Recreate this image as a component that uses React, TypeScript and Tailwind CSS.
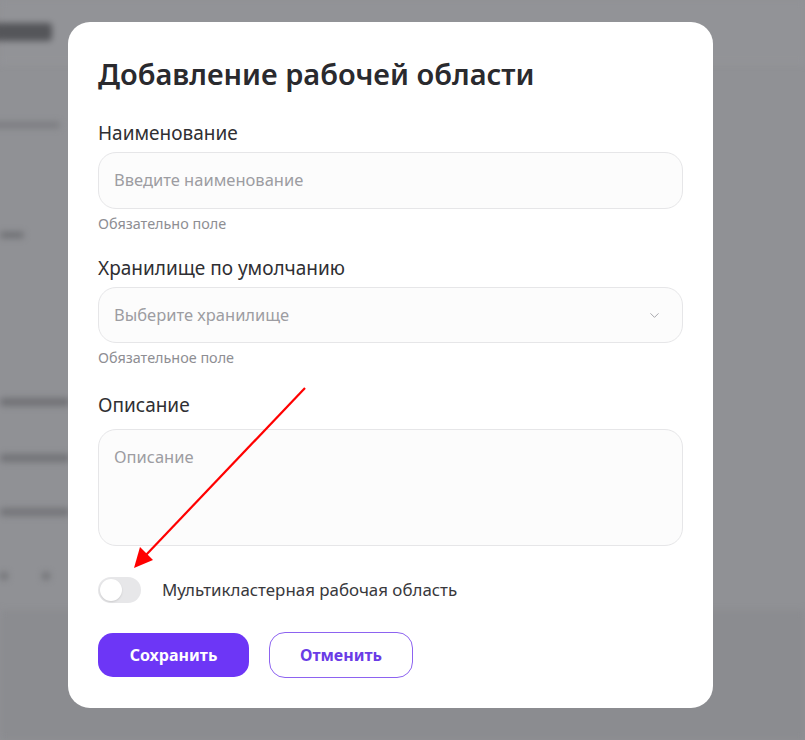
import { ChevronDown } from "lucide-react";

const шрифт = { fontFamily: '"Noto Sans", "Open Sans", sans-serif' };

function ФоновыеСтроки() {
  // размытая страница за модальным окном
  return (
    <div className="flex flex-col blur-[3px]">
      <div className="flex h-[64px] items-center border-b border-[#9a9b9f] bg-[#929397] pl-0">
        <div className="ml-[-8px] h-[18px] w-[60px] rounded bg-[#55565a]" />
      </div>
      <div className="mt-[58px] ml-[-10px] h-[6px] w-[70px] rounded bg-[#7b7c80]" />
      <div className="mt-[104px] h-[6px] w-[24px] rounded bg-[#6e6f73]" />
      <div className="mt-[160px] h-[8px] w-[70px] rounded bg-[#707175]" />
      <div className="mt-[48px] h-[8px] w-[70px] rounded bg-[#727377]" />
      <div className="mt-[46px] h-[8px] w-[70px] rounded bg-[#747579]" />
      <div className="mt-[56px] flex gap-[34px]">
        <div className="h-[8px] w-[8px] rounded-full bg-[#727377]" />
        <div className="h-[8px] w-[8px] rounded-full bg-[#727377]" />
      </div>
      <div className="mt-[30px] h-[130px] bg-[#8b8c90]" />
    </div>
  );
}

function Поле({ label, placeholder, hint }: { label: string; placeholder: string; hint?: string }) {
  return (
    <div className="flex flex-col">
      <label className="text-[19px] leading-[24px] text-[#2f2f33]">{label}</label>
      <div className="mt-[7px] flex h-[57px] items-center rounded-[18px] border border-[#e6e6e8] bg-[#fcfcfc] px-[15px]">
        <span className="text-[16.5px] text-[#9d9da2]">{placeholder}</span>
      </div>
      {hint && <span className="mt-[7px] text-[14.4px] leading-[16px] text-[#8e8e93]">{hint}</span>}
    </div>
  );
}

export default function App() {
  return (
    <div className="relative h-[740px] w-[805px] overflow-hidden bg-[#909195]" style={шрифт}>
      <ФоновыеСтроки />

      <div className="absolute left-[68px] top-[22px] flex h-[686px] w-[645px] flex-col rounded-[22px] bg-white px-[30px] pt-[30px]">
        <h1 className="text-[29px] font-semibold leading-[44px] text-[#2a2a2e]">Добавление рабочей области</h1>

        <div className="mt-[25px]">
          <Поле label="Наименование" placeholder="Введите наименование" hint="Обязательно поле" />
        </div>

        <div className="mt-[24px] flex flex-col">
          <label className="text-[19px] leading-[24px] text-[#2f2f33]">Хранилище по умолчанию</label>
          <div className="mt-[7px] flex h-[56px] items-center justify-between rounded-[18px] border border-[#e6e6e8] bg-[#fcfcfc] pl-[15px] pr-[20px]">
            <span className="text-[16.5px] text-[#9d9da2]">Выберите хранилище</span>
            <ChevronDown size={15} strokeWidth={1.6} className="text-[#a8a8ad]" />
          </div>
          <span className="mt-[7px] text-[14.4px] leading-[16px] text-[#8e8e93]">Обязательное поле</span>
        </div>

        <div className="mt-[27px] flex flex-col">
          <label className="text-[19px] leading-[24px] text-[#2f2f33]">Описание</label>
          <div className="mt-[12px] h-[117px] rounded-[18px] border border-[#e6e6e8] bg-[#fcfcfc] px-[15px] pt-[15px]">
            <span className="text-[16.5px] text-[#9d9da2]">Описание</span>
          </div>
        </div>

        <div className="mt-[31px] flex items-center gap-[21px]">
          <div className="flex h-[26px] w-[43px] items-center rounded-full bg-[#e7e7e9] p-[2px]">
            <div className="h-[22px] w-[22px] rounded-full bg-white shadow-[0_1px_2px_rgba(0,0,0,0.12)]" />
          </div>
          <span className="text-[16.9px] text-[#38383c]">Мультикластерная рабочая область</span>
        </div>

        <div className="mt-[29px] flex items-center gap-[20px]">
          <button className="h-[44px] w-[151px] rounded-[15px] bg-[#6d36f6] text-[16px] font-bold text-white">
            Сохранить
          </button>
          <button className="h-[46px] w-[144px] rounded-[16px] border border-[#8d63f0] bg-white text-[16px] font-bold text-[#6a3ce6]">
            Отменить
          </button>
        </div>
      </div>

      <svg className="absolute left-0 top-0" width="805" height="740" viewBox="0 0 805 740">
        <line x1="305" y1="388" x2="146" y2="555" stroke="#ff0000" strokeWidth="2.2" />
        <polygon points="134,568 140,547 153,560" fill="#ff0000" />
      </svg>
    </div>
  );
}
